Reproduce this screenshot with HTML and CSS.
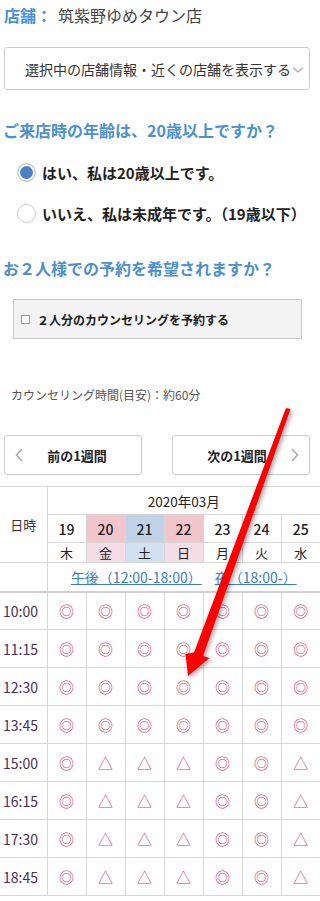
FILE: index.html
```html
<!DOCTYPE html>
<html lang="ja">
<head>
    <meta charset="UTF-8">
    <meta name="viewport" content="width=device-width, initial-scale=1.0">
    <title>ご予約 - 筑紫野ゆめタウン店</title>
    <link rel="stylesheet" href="styles.css">
</head>
<body>
    <div class="page">
        <p class="store"><span class="store-label">店舗：</span>筑紫野ゆめタウン店</p>

        <div class="store-select">
            <span class="store-select-text">選択中の店舗情報・近くの店舗を表示する</span>
            <svg class="select-arrow" width="12" height="8" viewBox="0 0 12 8">
                <polyline points="1,1.5 6,6 11,1.5" fill="none" stroke="#b5b5b5" stroke-width="1.6"/>
            </svg>
        </div>

        <h2 class="question">ご来店時の年齢は、20歳以上ですか？</h2>
        <ul class="radio-list">
            <li class="radio-item"><span class="radio checked"></span>はい、私は20歳以上です。</li>
            <li class="radio-item"><span class="radio"></span>いいえ、私は未成年です。（19歳以下）</li>
        </ul>

        <h2 class="question question-pair">お２人様での予約を希望されますか？</h2>
        <label class="pair-box"><span class="checkbox"></span>２人分のカウンセリングを予約する</label>

        <p class="duration">カウンセリング時間(目安)：約60分</p>

        <div class="week-nav">
            <a href="#" class="week-btn">
                <svg class="week-arrow" width="8" height="14" viewBox="0 0 8 14">
                    <polyline points="7,1 1.5,7 7,13" fill="none" stroke="#aaa" stroke-width="1.5"/>
                </svg>
                <span class="week-label">前の1週間</span>
            </a>
            <a href="#" class="week-btn">
                <span class="week-label">次の1週間</span>
                <svg class="week-arrow" width="8" height="14" viewBox="0 0 8 14">
                    <polyline points="1,1 6.5,7 1,13" fill="none" stroke="#aaa" stroke-width="1.5"/>
                </svg>
            </a>
        </div>

        <table class="calendar">
            <colgroup>
                <col class="col-time">
                <col span="7" class="col-day">
            </colgroup>
            <thead>
                <tr class="month-row">
                    <th rowspan="3" class="time-head">日時</th>
                    <th colspan="7" class="month">2020年03月</th>
                </tr>
                <tr class="day-row">
                    <th>19</th>
                    <th class="holiday">20</th>
                    <th class="saturday">21</th>
                    <th class="holiday">22</th>
                    <th>23</th>
                    <th>24</th>
                    <th>25</th>
                </tr>
                <tr class="weekday-row">
                    <th>木</th>
                    <th class="holiday">金</th>
                    <th class="saturday">土</th>
                    <th class="holiday">日</th>
                    <th>月</th>
                    <th>火</th>
                    <th>水</th>
                </tr>
                <tr class="period-row">
                    <td></td>
                    <td colspan="7" class="period-links">
                        <a href="#pm">午後（12:00-18:00）</a>
                        <a href="#night">夜（18:00-）</a>
                    </td>
                </tr>
            </thead>
            <tbody id="slots"></tbody>
        </table>
    </div>

    <svg class="annotation" width="320" height="901" viewBox="0 0 320 901">
        <path d="M286,408 L290.5,409 L203,656 L209.5,658 L188,676 L185.5,654 L194,652.5 Z" fill="#ff0000"/>
    </svg>

    <script>
        // availability per time slot, one mark per day
        const slots = [
            ['10:00', '◎◎◎◎◎◎◎'],
            ['11:15', '◎◎◎◎◎◎◎'],
            ['12:30', '◎◎◎◎◎◎◎'],
            ['13:45', '◎◎◎◎◎◎◎'],
            ['15:00', '◎△△△◎◎△'],
            ['16:15', '◎△△△◎◎△'],
            ['17:30', '◎△△△◎◎△'],
            ['18:45', '◎△△△◎◎△']
        ];

        const body = document.getElementById('slots');
        slots.forEach(([time, marks]) => {
            const row = document.createElement('tr');
            row.innerHTML = '<td class="time">' + time + '</td>' +
                [...marks].map(m => '<td class="mark ' + (m === '◎' ? 'open' : 'few') + '">' + m + '</td>').join('');
            body.appendChild(row);
        });
    </script>
</body>
</html>
```

FILE: styles.css
```css
* {
    margin: 0;
    padding: 0;
    box-sizing: border-box;
}

body {
    font-family: "Noto Sans CJK JP", sans-serif;
    color: #333;
    background: #fff;
    position: relative;
    width: 320px;
    overflow: hidden;
}

.store {
    height: 30px;
    line-height: 30px;
    font-size: 16px;
    color: #444;
    padding-left: 4px;
}

.store-label {
    color: #4a90d2;
    font-weight: bold;
    margin-right: 6px;
}

.store-select {
    margin: 17px 10px 0 4px;
    height: 43px;
    border: 1px solid #ccc;
    border-radius: 3px;
    display: flex;
    align-items: center;
    padding-left: 20px;
    font-size: 14px;
    color: #333;
    white-space: nowrap;
    overflow: hidden;
}

.select-arrow {
    flex-shrink: 0;
    margin-left: 1px;
    margin-top: 2px;
}

.question {
    margin-top: 28px;
    padding-left: 3px;
    font-size: 16px;
    line-height: 24px;
    font-weight: bold;
    color: #4a90d2;
}

.question-pair {
    margin-top: 22px;
}

.radio-list {
    list-style: none;
    margin-top: 10px;
}

.radio-item {
    height: 41px;
    display: flex;
    align-items: center;
    padding-left: 17px;
    font-size: 15px;
    font-weight: bold;
    color: #222;
    white-space: nowrap;
}

.radio {
    width: 19px;
    height: 19px;
    border: 1px solid #ccc;
    border-radius: 50%;
    background: #fff;
    margin-right: 6px;
    flex-shrink: 0;
}

.radio.checked {
    background: #4a80c2;
    box-shadow: inset 0 0 0 2px #fff;
}

.pair-box {
    margin: 19px 18px 0 13px;
    height: 40px;
    background: #f3f3f3;
    border: 1px solid #c8c8c8;
    display: flex;
    align-items: center;
    padding-left: 7px;
    font-size: 12px;
    font-weight: bold;
    color: #222;
}

.checkbox {
    width: 9px;
    height: 9px;
    border: 1px solid #7c9cc8;
    background: #fff;
    margin-right: 7px;
}

.duration {
    margin-top: 46px;
    padding-left: 11px;
    font-size: 12px;
    line-height: 20px;
    color: #555;
}

.week-nav {
    margin: 30px 10px 11px 4px;
    display: flex;
    justify-content: space-between;
}

.week-btn {
    width: 138px;
    height: 40px;
    border: 1px solid #ccc;
    border-radius: 3px;
    display: flex;
    align-items: center;
    padding: 0 10px;
    text-decoration: none;
    color: #222;
    font-size: 13px;
    font-weight: bold;
}

.week-label {
    flex: 1;
    text-align: center;
}

.calendar {
    width: 320px;
    border-collapse: collapse;
    table-layout: fixed;
    font-size: 14px;
}

.col-time {
    width: 47px;
}

.col-day {
    width: 39px;
}

.calendar th,
.calendar td {
    border: 1px solid #d6d6d6;
    text-align: center;
    font-weight: normal;
    padding: 0;
}

.calendar tr > :last-child {
    border-right: none;
}

.calendar .time-head,
.calendar .time,
.period-row td:first-child {
    border-left: none;
}

.time-head {
    font-size: 13px;
    color: #333;
}

.month-row {
    height: 28px;
}

.month {
    font-size: 13.5px;
    font-weight: 500;
    color: #222;
}

.day-row {
    height: 28px;
}

.day-row th {
    font-size: 14px;
    font-weight: 500;
    color: #222;
}

.weekday-row {
    height: 20px;
}

.weekday-row th {
    font-size: 13px;
    line-height: 18px;
    color: #222;
}

.day-row .holiday {
    background: #f2c5cd;
}

.day-row .saturday {
    background: #bfd2e8;
}

.weekday-row .holiday {
    background: #f5dde6;
}

.weekday-row .saturday {
    background: #d2e1f1;
}

.period-row {
    height: 29px;
}

.period-row td {
    border-bottom: 2px solid #d0d0d0;
}

.period-links a {
    color: #3a7bc8;
    font-size: 14px;
    margin: 0 5px;
}

#slots tr {
    height: 38px;
}

.time {
    text-align: left !important;
    padding-left: 3px !important;
    color: #4a2d5c;
    font-size: 14px;
}

.mark {
    font-size: 15px;
    font-weight: bold;
    color: #d93a6a;
}

.annotation {
    position: absolute;
    top: 0;
    left: 0;
    pointer-events: none;
    filter: drop-shadow(2px 2px 2px rgba(0, 0, 0, 0.35));
}
```
